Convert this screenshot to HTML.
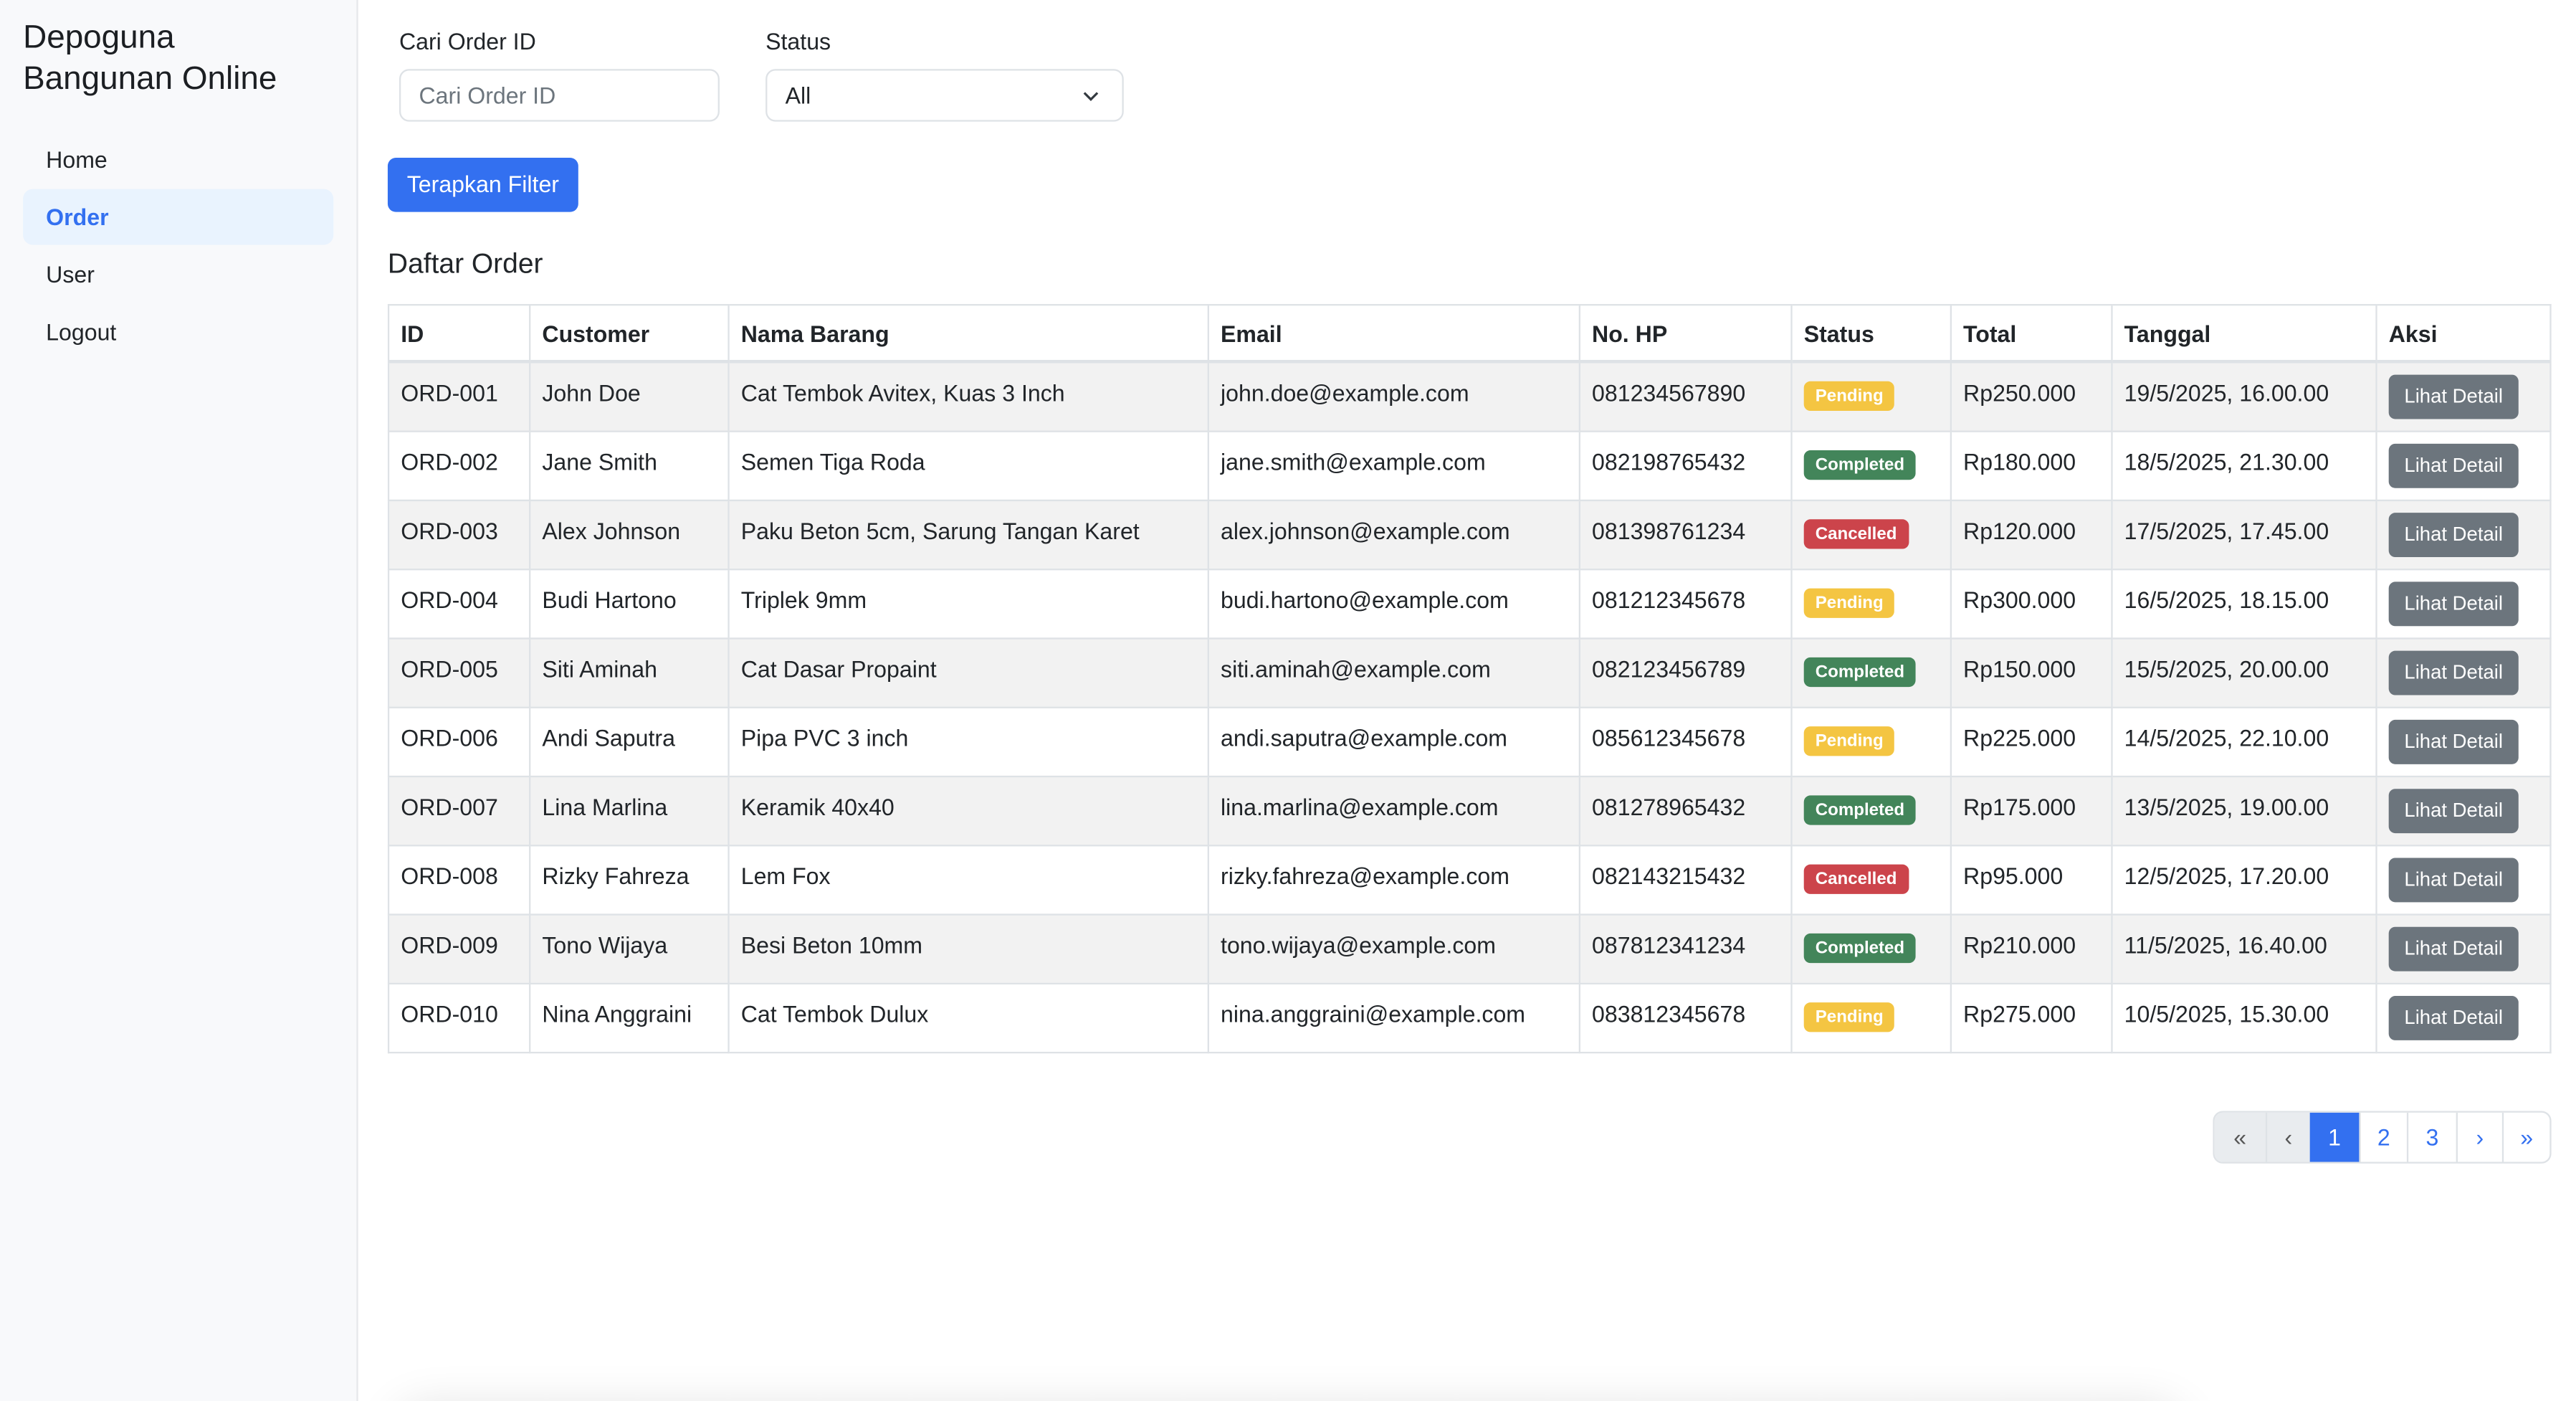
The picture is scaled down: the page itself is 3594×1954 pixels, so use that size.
<!DOCTYPE html>
<html><head><meta charset="utf-8"><style>
html,body{margin:0;padding:0;background:#fff;overflow:hidden}
body{width:3594px;height:1954px;position:relative}
#w{position:absolute;left:0;top:0;width:1568px;height:853px;transform:scale(2.29209);transform-origin:0 0;font-family:"Liberation Sans",Arial,sans-serif;color:#212529;font-size:14px;overflow:hidden}
.a{position:absolute}
#side{left:0;top:0;width:217px;height:853px;background:#f8f9fb;border-right:1px solid #e6e8eb}
.nav{left:14px;width:189px;height:34px;line-height:34px;padding-left:14px;box-sizing:border-box;font-size:14px;border-radius:6px}
.lbl{font-size:14px}
.inp{border:1px solid #dee2e6;border-radius:6px;height:32px;box-sizing:border-box;line-height:30px;padding-left:11px;font-size:14px}
table{position:absolute;left:236px;top:185px;border-collapse:collapse;font-size:14px;table-layout:fixed}
td,th{border:1px solid #dee2e6;padding:0 7px;text-align:left;vertical-align:top;line-height:1}
th{font-weight:bold;height:33px;vertical-align:middle;padding-top:0}
td{padding-top:11px;height:42px;box-sizing:border-box}
tr.s td{background:#f2f2f2}
thead tr th{border-bottom:2px solid #dee2e6}
.b{display:inline-block;font-size:10.5px;font-weight:bold;color:#fff;border-radius:4px;padding:0 7px;height:18px;line-height:18px;margin-top:0}
.p{background:#f4c542}.c{background:#43855a}.x{background:#cc444b}
.btn{display:inline-block;background:#6c757d;color:#fff;font-size:12px;border-radius:4px;width:79px;height:27px;line-height:27px;text-align:center;margin-top:-4px}
#pg{left:1347px;top:676px;height:32px;display:flex;border:1px solid #dee2e6;border-radius:6px;overflow:hidden;box-sizing:border-box}
#pg div{height:32px;line-height:30px;text-align:center;border-left:1px solid #dee2e6;color:#3370f0;font-size:14px;box-sizing:border-box}
#pg div:first-child{border-left:0}
</style></head><body><div id="w">
<div class="a" id="side"></div>
<div class="a" style="left:14px;top:11px;font-size:20px;line-height:25px;color:#1c1f23">Depoguna<br>Bangunan Online</div>
<div class="a nav" style="top:80px">Home</div>
<div class="a nav" style="top:115px;background:#e9f3fe;color:#3370f0;font-weight:bold">Order</div>
<div class="a nav" style="top:150px">User</div>
<div class="a nav" style="top:185px">Logout</div>

<div class="a lbl" style="left:243px;top:17px">Cari Order ID</div>
<div class="a lbl" style="left:466px;top:17px">Status</div>
<div class="a inp" style="left:243px;top:42px;width:195px;color:#6c757d">Cari Order ID</div>
<div class="a inp" style="left:466px;top:42px;width:218px">All<svg style="position:absolute;right:14px;top:12px" width="10" height="7" viewBox="0 0 10 7"><path d="M1 1.5 L5 5.5 L9 1.5" fill="none" stroke="#343a40" stroke-width="1.4"/></svg></div>
<div class="a" style="left:236px;top:96px;width:116px;height:33px;background:#3370f0;color:#fff;border-radius:5px;line-height:33px;text-align:center;font-size:14px">Terapkan Filter</div>
<div class="a" style="left:236px;top:151px;font-size:17px">Daftar Order</div>

<table>
<colgroup><col style="width:86px"><col style="width:121px"><col style="width:292px"><col style="width:226px"><col style="width:129px"><col style="width:97px"><col style="width:98px"><col style="width:161px"><col style="width:106px"></colgroup>
<thead><tr><th>ID</th><th>Customer</th><th>Nama Barang</th><th>Email</th><th>No. HP</th><th>Status</th><th>Total</th><th>Tanggal</th><th>Aksi</th></tr></thead>
<tbody>
<tr class="s"><td>ORD-001</td><td>John Doe</td><td>Cat Tembok Avitex, Kuas 3 Inch</td><td>john.doe@example.com</td><td>081234567890</td><td><span class="b p">Pending</span></td><td>Rp250.000</td><td>19/5/2025, 16.00.00</td><td><span class="btn">Lihat Detail</span></td></tr>
<tr><td>ORD-002</td><td>Jane Smith</td><td>Semen Tiga Roda</td><td>jane.smith@example.com</td><td>082198765432</td><td><span class="b c">Completed</span></td><td>Rp180.000</td><td>18/5/2025, 21.30.00</td><td><span class="btn">Lihat Detail</span></td></tr>
<tr class="s"><td>ORD-003</td><td>Alex Johnson</td><td>Paku Beton 5cm, Sarung Tangan Karet</td><td>alex.johnson@example.com</td><td>081398761234</td><td><span class="b x">Cancelled</span></td><td>Rp120.000</td><td>17/5/2025, 17.45.00</td><td><span class="btn">Lihat Detail</span></td></tr>
<tr><td>ORD-004</td><td>Budi Hartono</td><td>Triplek 9mm</td><td>budi.hartono@example.com</td><td>081212345678</td><td><span class="b p">Pending</span></td><td>Rp300.000</td><td>16/5/2025, 18.15.00</td><td><span class="btn">Lihat Detail</span></td></tr>
<tr class="s"><td>ORD-005</td><td>Siti Aminah</td><td>Cat Dasar Propaint</td><td>siti.aminah@example.com</td><td>082123456789</td><td><span class="b c">Completed</span></td><td>Rp150.000</td><td>15/5/2025, 20.00.00</td><td><span class="btn">Lihat Detail</span></td></tr>
<tr><td>ORD-006</td><td>Andi Saputra</td><td>Pipa PVC 3 inch</td><td>andi.saputra@example.com</td><td>085612345678</td><td><span class="b p">Pending</span></td><td>Rp225.000</td><td>14/5/2025, 22.10.00</td><td><span class="btn">Lihat Detail</span></td></tr>
<tr class="s"><td>ORD-007</td><td>Lina Marlina</td><td>Keramik 40x40</td><td>lina.marlina@example.com</td><td>081278965432</td><td><span class="b c">Completed</span></td><td>Rp175.000</td><td>13/5/2025, 19.00.00</td><td><span class="btn">Lihat Detail</span></td></tr>
<tr><td>ORD-008</td><td>Rizky Fahreza</td><td>Lem Fox</td><td>rizky.fahreza@example.com</td><td>082143215432</td><td><span class="b x">Cancelled</span></td><td>Rp95.000</td><td>12/5/2025, 17.20.00</td><td><span class="btn">Lihat Detail</span></td></tr>
<tr class="s"><td>ORD-009</td><td>Tono Wijaya</td><td>Besi Beton 10mm</td><td>tono.wijaya@example.com</td><td>087812341234</td><td><span class="b c">Completed</span></td><td>Rp210.000</td><td>11/5/2025, 16.40.00</td><td><span class="btn">Lihat Detail</span></td></tr>
<tr><td>ORD-010</td><td>Nina Anggraini</td><td>Cat Tembok Dulux</td><td>nina.anggraini@example.com</td><td>083812345678</td><td><span class="b p">Pending</span></td><td>Rp275.000</td><td>10/5/2025, 15.30.00</td><td><span class="btn">Lihat Detail</span></td></tr>
</tbody></table>

<div class="a" id="pg">
<div style="width:31px;background:#e9ecef;color:#555">«</div>
<div style="width:27px;background:#e9ecef;color:#555">‹</div>
<div style="width:30px;background:#3370f0;color:#fff;border-left:0">1</div>
<div style="width:29px">2</div>
<div style="width:30px">3</div>
<div style="width:28px">›</div>
<div style="width:29px">»</div>
</div>
<div class="a" style="left:250px;top:866px;width:1070px;height:20px;box-shadow:0 0 28px 10px rgba(0,0,0,0.12);border-radius:20px"></div>
</div></body></html>
